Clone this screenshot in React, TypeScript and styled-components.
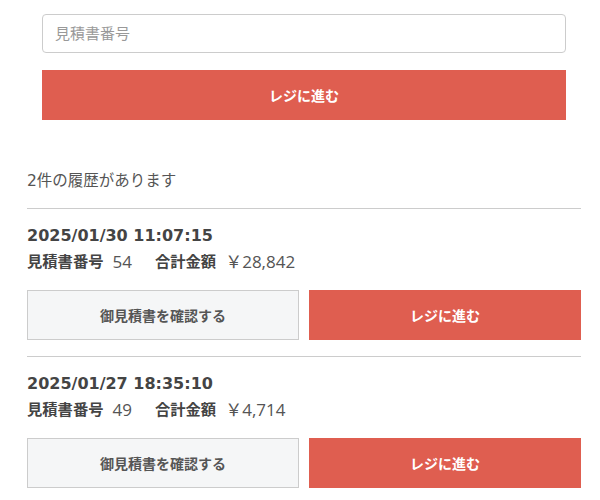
import React from "react";
import styled, { createGlobalStyle } from "styled-components";

const Global = createGlobalStyle`
  html, body { margin: 0; padding: 0; background: #fff; }
  body {
    font-family: "DejaVu Sans", "Noto Sans CJK JP", sans-serif;
    color: #444;
  }
  * { box-sizing: border-box; }
`;

const Page = styled.div`
  width: 554px;
  margin-left: 27px;
`;

const Form = styled.form`
  display: flex;
  flex-direction: column;
  gap: 17px;
  padding: 14px 15px 0;
`;

const Input = styled.input`
  height: 39px;
  width: 100%;
  border: 1px solid #cccccc;
  border-radius: 4px;
  padding: 0 12px 2px;
  font-family: "Noto Sans CJK JP", sans-serif;
  font-size: 15px;
  color: #444;
  outline: none;
  &::placeholder { color: #999; }
`;

const Button = styled.button<{ $variant?: "primary" | "secondary" }>`
  height: 50px;
  width: 100%;
  display: flex;
  align-items: center;
  justify-content: center;
  font-family: "Noto Sans CJK JP", sans-serif;
  font-size: 14px;
  font-weight: 700;
  cursor: pointer;
  border: 1px solid ${p => (p.$variant === "secondary" ? "#cccccc" : "#df5e50")};
  background: ${p => (p.$variant === "secondary" ? "#f5f6f7" : "#df5e50")};
  color: ${p => (p.$variant === "secondary" ? "#555" : "#fff")};
`;

const Count = styled.p`
  margin: 49px 0 15px;
  font-size: 15.5px;
  line-height: 24px;
  color: #555;
`;

const List = styled.div`
  border-top: 1px solid #cccccc;
`;

const Item = styled.div`
  padding: 15px 0 16px;
  border-bottom: 1px solid #cccccc;
  &:last-child { border-bottom: none; }
`;

const DateLine = styled.div`
  font-size: 16px;
  line-height: 24px;
  font-weight: 700;
  color: #444;
`;

const Info = styled.div`
  margin-top: 2px;
  display: flex;
  gap: 23px;
  font-size: 15.3px;
  line-height: 24px;
  color: #555;
`;

const Field = styled.span`
  display: inline-flex;
  gap: 9px;
`;

const Label = styled.span`
  font-weight: 700;
  color: #444;
`;

const Value = styled.span`
  font-family: "Open Sans", "Noto Sans CJK JP", sans-serif;
  font-size: 17px;
  font-weight: 400;
  color: #555;
`;

const Actions = styled.div`
  margin-top: 16px;
  display: grid;
  grid-template-columns: 1fr 1fr;
  gap: 10px;
`;

const history = [
  { date: "2025/01/30 11:07:15", no: "54", total: "￥28,842" },
  { date: "2025/01/27 18:35:10", no: "49", total: "￥4,714" },
];

export default function App() {
  return (
    <>
      <Global />
      <Page>
        <Form onSubmit={e => e.preventDefault()}>
          <Input placeholder="見積書番号" />
          <Button type="submit">レジに進む</Button>
        </Form>
        <Count>2件の履歴があります</Count>
        <List>
          {history.map(h => (
            <Item key={h.date}>
              <DateLine>{h.date}</DateLine>
              <Info>
                <Field>
                  <Label>見積書番号</Label>
                  <Value>{h.no}</Value>
                </Field>
                <Field>
                  <Label>合計金額</Label>
                  <Value>{h.total}</Value>
                </Field>
              </Info>
              <Actions>
                <Button $variant="secondary">御見積書を確認する</Button>
                <Button>レジに進む</Button>
              </Actions>
            </Item>
          ))}
        </List>
      </Page>
    </>
  );
}
